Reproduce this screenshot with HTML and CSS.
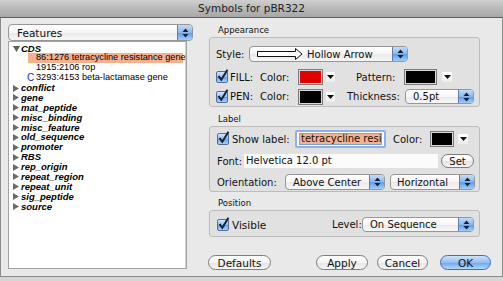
FILE: index.html
```html
<!DOCTYPE html>
<html>
<head>
<meta charset="utf-8">
<link rel="stylesheet" href="styles.css">
</head>
<body>
<div class="window">
  <div class="titlebar">Symbols for pBR322</div>
  <div class="content">
    <div class="left">
      <div class="popup wide">
        <span class="ptext">Features</span>
        <span class="stepper"><svg width="7" height="10" viewBox="0 0 7 10"><path d="M3.5 0.5 L6.5 4 L0.5 4 Z M0.5 6 L6.5 6 L3.5 9.5 Z" fill="#16202e"/></svg></span>
      </div>
      <div class="list">
        <div class="row cat"><span class="tri"><svg width="7" height="6" viewBox="0 0 7 6"><path d="M0 0 L7 0 L3.5 6 Z" fill="#5e5e5e"/></svg></span>CDS</div>
        <div class="row sub sel"><span class="mark"></span>86:1276 tetracycline resistance gene</div>
        <div class="row sub"><span class="mark"></span>1915:2106 rop</div>
        <div class="row sub"><span class="mark c">C</span>3293:4153 beta-lactamase gene</div>
        <div class="row cat"><span class="tri"><svg width="6" height="7" viewBox="0 0 6 7"><path d="M0 0 L6 3.5 L0 7 Z" fill="#6a6a6a"/></svg></span>conflict</div>
        <div class="row cat"><span class="tri"><svg width="6" height="7" viewBox="0 0 6 7"><path d="M0 0 L6 3.5 L0 7 Z" fill="#6a6a6a"/></svg></span>gene</div>
        <div class="row cat"><span class="tri"><svg width="6" height="7" viewBox="0 0 6 7"><path d="M0 0 L6 3.5 L0 7 Z" fill="#6a6a6a"/></svg></span>mat_peptide</div>
        <div class="row cat"><span class="tri"><svg width="6" height="7" viewBox="0 0 6 7"><path d="M0 0 L6 3.5 L0 7 Z" fill="#6a6a6a"/></svg></span>misc_binding</div>
        <div class="row cat"><span class="tri"><svg width="6" height="7" viewBox="0 0 6 7"><path d="M0 0 L6 3.5 L0 7 Z" fill="#6a6a6a"/></svg></span>misc_feature</div>
        <div class="row cat"><span class="tri"><svg width="6" height="7" viewBox="0 0 6 7"><path d="M0 0 L6 3.5 L0 7 Z" fill="#6a6a6a"/></svg></span>old_sequence</div>
        <div class="row cat"><span class="tri"><svg width="6" height="7" viewBox="0 0 6 7"><path d="M0 0 L6 3.5 L0 7 Z" fill="#6a6a6a"/></svg></span>promoter</div>
        <div class="row cat"><span class="tri"><svg width="6" height="7" viewBox="0 0 6 7"><path d="M0 0 L6 3.5 L0 7 Z" fill="#6a6a6a"/></svg></span>RBS</div>
        <div class="row cat"><span class="tri"><svg width="6" height="7" viewBox="0 0 6 7"><path d="M0 0 L6 3.5 L0 7 Z" fill="#6a6a6a"/></svg></span>rep_origin</div>
        <div class="row cat"><span class="tri"><svg width="6" height="7" viewBox="0 0 6 7"><path d="M0 0 L6 3.5 L0 7 Z" fill="#6a6a6a"/></svg></span>repeat_region</div>
        <div class="row cat"><span class="tri"><svg width="6" height="7" viewBox="0 0 6 7"><path d="M0 0 L6 3.5 L0 7 Z" fill="#6a6a6a"/></svg></span>repeat_unit</div>
        <div class="row cat"><span class="tri"><svg width="6" height="7" viewBox="0 0 6 7"><path d="M0 0 L6 3.5 L0 7 Z" fill="#6a6a6a"/></svg></span>sig_peptide</div>
        <div class="row cat"><span class="tri"><svg width="6" height="7" viewBox="0 0 6 7"><path d="M0 0 L6 3.5 L0 7 Z" fill="#6a6a6a"/></svg></span>source</div>
      </div>
    </div>
    <div class="right">
      <div class="gtitle t1">Appearance</div>
      <div class="group g1">
        <div class="line r-style">
          <span class="lbl w-style">Style:</span>
          <div class="popup p-style">
            <svg class="arrowsample" width="46" height="12" viewBox="0 0 46 12"><path d="M0.5 3.5 L38.5 3.5 L38.5 0.5 L45 6 L38.5 11.5 L38.5 8.5 L0.5 8.5 Z" fill="#fff" stroke="#111" stroke-width="1"/></svg>
            <span class="ptext">Hollow Arrow</span>
            <span class="stepper"><svg width="7" height="10" viewBox="0 0 7 10"><path d="M3.5 0.5 L6.5 4 L0.5 4 Z M0.5 6 L6.5 6 L3.5 9.5 Z" fill="#16202e"/></svg></span>
          </div>
        </div>
        <div class="line r-fill">
          <span class="cb"><svg width="13" height="14" viewBox="0 0 13 14"><path d="M2.5 7 L5.3 10.8 L11.5 0.8" fill="none" stroke="#15213a" stroke-width="2"/></svg></span>
          <span class="lbl w-kind">FILL:</span>
          <span class="lbl w-color">Color:</span>
          <span class="well w25"><i class="red"></i></span>
          <span class="drop"><svg width="7" height="4" viewBox="0 0 7 4"><path d="M0 0 L7 0 L3.5 4 Z" fill="#111"/></svg></span>
          <span class="lbl w-pattern">Pattern:</span>
          <span class="well w33"><i class="black"></i></span>
          <span class="drop d2"><svg width="7" height="4" viewBox="0 0 7 4"><path d="M0 0 L7 0 L3.5 4 Z" fill="#111"/></svg></span>
        </div>
        <div class="line r-pen">
          <span class="cb"><svg width="13" height="14" viewBox="0 0 13 14"><path d="M2.5 7 L5.3 10.8 L11.5 0.8" fill="none" stroke="#15213a" stroke-width="2"/></svg></span>
          <span class="lbl w-kind">PEN:</span>
          <span class="lbl w-color">Color:</span>
          <span class="well w25"><i class="black"></i></span>
          <span class="drop"><svg width="7" height="4" viewBox="0 0 7 4"><path d="M0 0 L7 0 L3.5 4 Z" fill="#111"/></svg></span>
          <span class="lbl w-thick">Thickness:</span>
          <div class="popup p-thick">
            <span class="ptext">0.5pt</span>
            <span class="stepper"><svg width="7" height="10" viewBox="0 0 7 10"><path d="M3.5 0.5 L6.5 4 L0.5 4 Z M0.5 6 L6.5 6 L3.5 9.5 Z" fill="#16202e"/></svg></span>
          </div>
        </div>
      </div>

      <div class="gtitle t2">Label</div>
      <div class="group g2">
        <div class="line r-show">
          <span class="cb"><svg width="13" height="14" viewBox="0 0 13 14"><path d="M2.5 7 L5.3 10.8 L11.5 0.8" fill="none" stroke="#15213a" stroke-width="2"/></svg></span>
          <span class="lbl w-show">Show label:</span>
          <span class="focusfield"><span class="seltext">tetracycline resi</span></span>
          <span class="lbl w-color2">Color:</span>
          <span class="well w24"><i class="black"></i></span>
          <span class="drop d3"><svg width="7" height="4" viewBox="0 0 7 4"><path d="M0 0 L7 0 L3.5 4 Z" fill="#111"/></svg></span>
        </div>
        <div class="line r-font">
          <span class="lbl w-font">Font:</span>
          <span class="fontfield">Helvetica 12.0 pt</span>
          <span class="btn setbtn">Set</span>
        </div>
        <div class="line r-orient">
          <span class="lbl w-orient">Orientation:</span>
          <div class="popup p-above">
            <span class="ptext">Above Center</span>
            <span class="stepper"><svg width="7" height="10" viewBox="0 0 7 10"><path d="M3.5 0.5 L6.5 4 L0.5 4 Z M0.5 6 L6.5 6 L3.5 9.5 Z" fill="#16202e"/></svg></span>
          </div>
          <div class="popup p-horiz">
            <span class="ptext">Horizontal</span>
            <span class="stepper"><svg width="7" height="10" viewBox="0 0 7 10"><path d="M3.5 0.5 L6.5 4 L0.5 4 Z M0.5 6 L6.5 6 L3.5 9.5 Z" fill="#16202e"/></svg></span>
          </div>
        </div>
      </div>

      <div class="gtitle t3">Position</div>
      <div class="group g3">
        <div class="line r-vis">
          <span class="cb"><svg width="13" height="14" viewBox="0 0 13 14"><path d="M2.5 7 L5.3 10.8 L11.5 0.8" fill="none" stroke="#15213a" stroke-width="2"/></svg></span>
          <span class="lbl w-vis">Visible</span>
          <span class="lbl w-level">Level:</span>
          <div class="popup p-level">
            <span class="ptext">On Sequence</span>
            <span class="stepper"><svg width="7" height="10" viewBox="0 0 7 10"><path d="M3.5 0.5 L6.5 4 L0.5 4 Z M0.5 6 L6.5 6 L3.5 9.5 Z" fill="#16202e"/></svg></span>
          </div>
        </div>
      </div>

      <div class="buttons">
        <span class="btn b-def">Defaults</span>
        <span class="btn b-apply">Apply</span>
        <span class="btn b-cancel">Cancel</span>
        <span class="btn b-ok">OK</span>
      </div>
    </div>
  </div>
</div>
</body>
</html>
```

FILE: styles.css
```css
html, body {
  margin: 0;
  padding: 0;
  background: #d6d6d6;
}
body {
  width: 503px;
  height: 281px;
  overflow: hidden;
  font-family: "DejaVu Sans", "Liberation Sans", sans-serif;
  font-size: 10px;
  color: #111;
}
.window {
  width: 503px;
  height: 277px;
  box-sizing: border-box;
  background: #e9e9e9;
  border-left: 1px solid #8c8c8c;
  border-right: 1px solid #8c8c8c;
  border-bottom: 1px solid #8c8c8c;
}
.titlebar {
  height: 17px;
  line-height: 17px;
  border-bottom: 1px solid #5f5f5f;
  background: linear-gradient(#cfcfcf, #b9b9b9 50%, #a7a7a7);
  text-align: center;
  font-size: 10.5px;
  color: #222;
  margin: 0 -1px;
}
.content {
  display: flex;
  padding: 6px 0 0 7px;
}
.left {
  width: 185px;
  display: flex;
  flex-direction: column;
}
.popup {
  display: flex;
  align-items: center;
  box-sizing: border-box;
  height: 16px;
  border: 1px solid #969696;
  border-radius: 4px;
  overflow: hidden;
  background: linear-gradient(#ffffff, #f6f6f6 50%, #e9e9e9 51%, #f7f7f7);
  padding-left: 7px;
  white-space: nowrap;
}
.popup .ptext {
  color: #111;
}
.popup .stepper {
  margin-left: auto;
  width: 14px;
  align-self: stretch;
  display: flex;
  align-items: center;
  justify-content: center;
  border-left: 1px solid #5a7fb5;
  background: linear-gradient(#c3daf7, #8bb8ef 50%, #5c9be8 51%, #a3cdf7);
}
.popup.wide {
  width: 185px;
  height: 17px;
  padding-left: 8px;
  font-size: 10.5px;
}
.list {
  margin-top: 0;
  width: 179px;
  height: 228px;
  box-sizing: border-box;
  background: #fff;
  border: 1px solid #a3a3a3;
  box-shadow: inset -1px 0 #d0d0d0;
  padding-top: 1.6px;
  font-family: "Liberation Sans", Arial, sans-serif;
}
.row {
  display: flex;
  align-items: center;
  height: 9.875px;
  line-height: 9.875px;
  font-size: 9.2px;
  white-space: nowrap;
  color: #000;
}
.row.cat {
  font-weight: bold;
  font-style: italic;
  font-size: 9.5px;
}
.tri {
  width: 12px;
  padding-left: 4px;
  box-sizing: border-box;
  display: flex;
  align-items: center;
}
.row.sub .mark {
  width: 27px;
  box-sizing: border-box;
  padding-left: 18px;
}
.row.sub .mark.c {
  color: #1a25c4;
  font-size: 10px;
}
.row.sel {
  background: linear-gradient(90deg, transparent 19px, #f5b18f 19px, #f5b18f 174px, transparent 174px);
}
.right {
  margin-left: 16px;
  width: 271px;
  display: flex;
  flex-direction: column;
}
.gtitle {
  font-size: 8.5px;
  line-height: 13px;
  height: 13px;
  padding-left: 9px;
  color: #111;
}
.t2 {
  margin-top: 6px;
}
.t3 {
  margin-top: 5px;
}
.group {
  box-sizing: border-box;
  border: 1px solid #bcbcbc;
  border-radius: 3px;
  background: #e1e1e1;
  padding-left: 6px;
}
.g1 { height: 70px; padding-top: 8px; }
.g2 { height: 66px; padding-top: 3px; padding-left: 7px; }
.g3 { height: 27px; padding-top: 6px; padding-left: 7px; }
.line {
  display: flex;
  align-items: center;
  white-space: nowrap;
}
.lbl {
  display: inline-block;
  flex: none;
}
.r-style { height: 16px; }
.r-fill { height: 16px; margin-top: 7px; }
.r-pen { height: 17px; margin-top: 3px; }
.w-style { width: 33px; }
.p-style { width: 159px; padding-left: 7px; }
.arrowsample { margin-right: 4px; flex: none; }
.cb {
  position: relative;
  flex: none;
  width: 12px;
  height: 12px;
  box-sizing: border-box;
  border: 1px solid #4e6f9c;
  border-radius: 2px;
  background: linear-gradient(#d5e6fb, #94bdef 50%, #6aa1e6 51%, #a9d0f7);
}
.cb svg {
  position: absolute;
  left: -1px;
  top: -3px;
}
.w-kind { width: 30px; margin-left: 2px; }
.w-color { width: 38px; }
.well {
  flex: none;
  box-sizing: border-box;
  height: 16px;
  border: 1px solid #7b7b7b;
  padding: 1px;
  background: #d9d9d9;
}
.well i {
  display: block;
  height: 100%;
}
.well .red { background: #e00000; }
.well .black { background: #000; }
.w25 { width: 25px; }
.w33 { width: 33px; }
.w24 { width: 24px; }
.drop {
  flex: none;
  width: 9px;
  height: 10px;
  margin-left: 3px;
  background: linear-gradient(#ffffff, #ececec);
  display: flex;
  align-items: center;
  justify-content: center;
}
.d2 { margin-left: 5px; width: 10px; }
.d3 { margin-left: 4px; width: 10px; }
.w-pattern { width: 48px; margin-left: 21px; }
.w-thick { width: 58px; margin-left: 12px; }
.p-thick { width: 69px; height: 15px; }
.r-show { height: 18px; }
.r-font { height: 14px; margin-top: 6px; }
.r-orient { height: 16px; margin-top: 6px; }
.w-show { width: 63px; margin-left: 3px; }
.focusfield {
  flex: none;
  box-sizing: border-box;
  width: 91px;
  height: 18px;
  border: 2px solid #8db2e8;
  border-radius: 2px;
  background: #fff;
  padding: 1px 2px;
  overflow: hidden;
  display: flex;
}
.seltext {
  display: block;
  background: #f6b18e;
  line-height: 12px;
  padding-left: 2px;
  white-space: nowrap;
  overflow: hidden;
  width: 100%;
  box-shadow: inset 0 0 0 1px #7aa0d6;
}
.w-color2 { width: 37px; margin-left: 7px; }
.w-font { width: 27px; }
.fontfield {
  flex: none;
  width: 194px;
  height: 14px;
  line-height: 14px;
  box-sizing: border-box;
  background: #fbfbfb;
  padding-left: 2px;
}
.btn {
  flex: none;
  box-sizing: border-box;
  display: flex;
  align-items: center;
  justify-content: center;
  border: 1px solid #7d7d7d;
  border-radius: 8px;
  background: linear-gradient(#ffffff, #f4f4f4 50%, #e4e4e4 51%, #f6f6f6);
  color: #111;
}
.setbtn { width: 33px; height: 14px; margin-left: 3px; }
.w-orient { width: 68px; }
.p-above { width: 100px; }
.p-horiz { width: 85px; margin-left: 5px; padding-left: 6px; }
.r-vis { height: 15px; }
.w-vis { width: 100px; margin-left: 3px; font-size: 10.5px; }
.w-level { width: 30px; }
.p-level { width: 112px; height: 15px; }
.buttons {
  display: flex;
  margin-top: 18px;
  margin-left: -1px;
  height: 15px;
}
.buttons .btn { height: 15px; font-size: 10.5px; }
.b-def { width: 63px; }
.b-apply { width: 52px; margin-left: 45px; }
.b-cancel { width: 51px; margin-left: 9px; }
.b-ok {
  width: 51px;
  margin-left: 12px;
  border-color: #3e6fb5;
  background: linear-gradient(#cfe2fb, #93bff2 50%, #6aa6ee 51%, #b2d8fb);
}
```
